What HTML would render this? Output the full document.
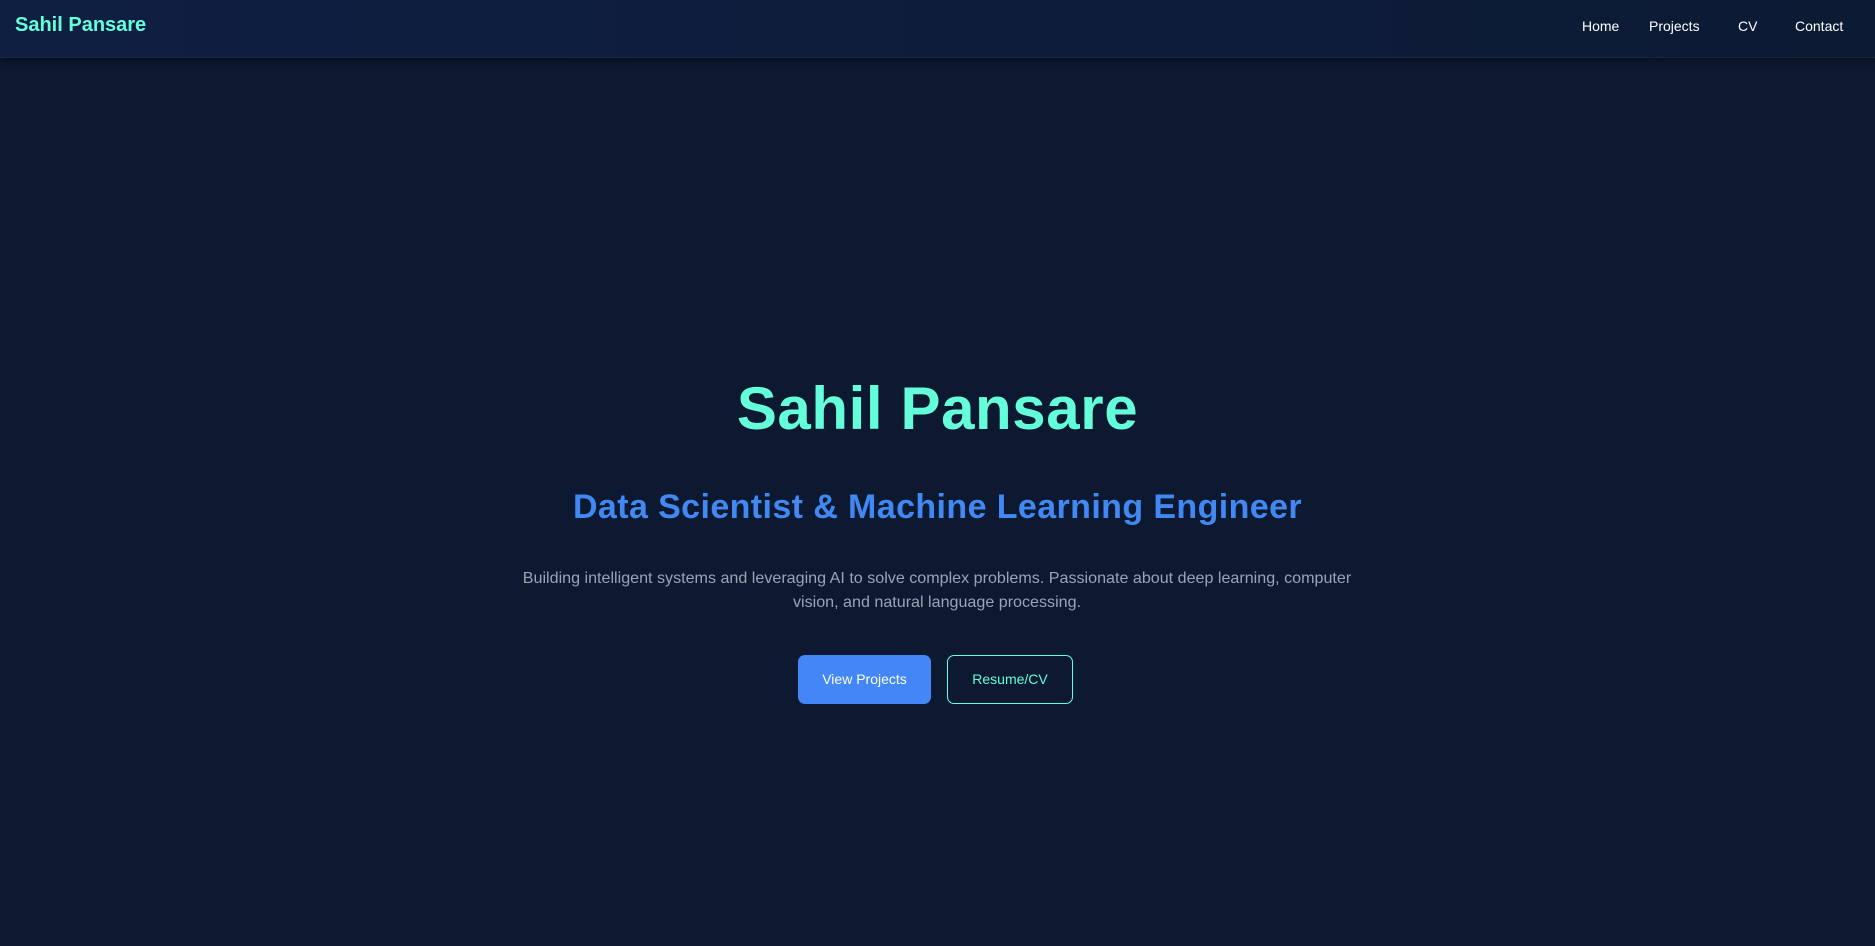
<!DOCTYPE html>
<html><head><meta charset="utf-8"><style>
*{margin:0;padding:0;box-sizing:border-box}
html,body{width:1875px;height:946px;overflow:hidden;background:#0c1930;font-family:"Liberation Sans",Arial,sans-serif}
nav{position:absolute;left:0;top:0;width:1875px;height:58px;background:linear-gradient(90deg,#0f1f42,#0c1a34);box-shadow:0 2px 6px rgba(0,0,0,.45);border-bottom:1px solid #1a2740}
.logo{position:absolute;left:15px;top:14px;font-size:20px;font-weight:bold;color:#64ffda}
.links a{position:absolute;top:18px;font-size:14px;color:#fff;text-decoration:none}
h1{position:absolute;left:0;width:1875px;text-align:center;top:370px;font-size:60px;line-height:78px;color:#64ffda;font-weight:bold;letter-spacing:.6px}
h2{position:absolute;left:0;width:1875px;text-align:center;top:486px;font-size:34px;line-height:42px;color:#4188f2;font-weight:bold;letter-spacing:.4px}
p{position:absolute;left:517px;width:840px;text-align:center;top:566px;font-size:16.1px;line-height:24px;color:#9aa4b5}
.btn{position:absolute;top:655px;height:49px;border-radius:7px;font-size:14px;line-height:49px;text-align:center}
.b1{left:798px;width:133px;background:#4287f5;color:#fff}
.b2{left:947px;width:126px;border:1px solid #64ffda;color:#64ffda;line-height:47px}
</style></head><body>
<nav><div class="logo">Sahil Pansare</div>
<div class="links"><a style="left:1582px">Home</a><a style="left:1649px">Projects</a><a style="left:1738px">CV</a><a style="left:1795px">Contact</a></div></nav>
<h1>Sahil Pansare</h1>
<h2>Data Scientist &amp; Machine Learning Engineer</h2>
<p>Building intelligent systems and leveraging AI to solve complex problems. Passionate about deep learning, computer vision, and natural language processing.</p>
<div class="btn b1">View Projects</div>
<div class="btn b2">Resume/CV</div>
</body></html>
